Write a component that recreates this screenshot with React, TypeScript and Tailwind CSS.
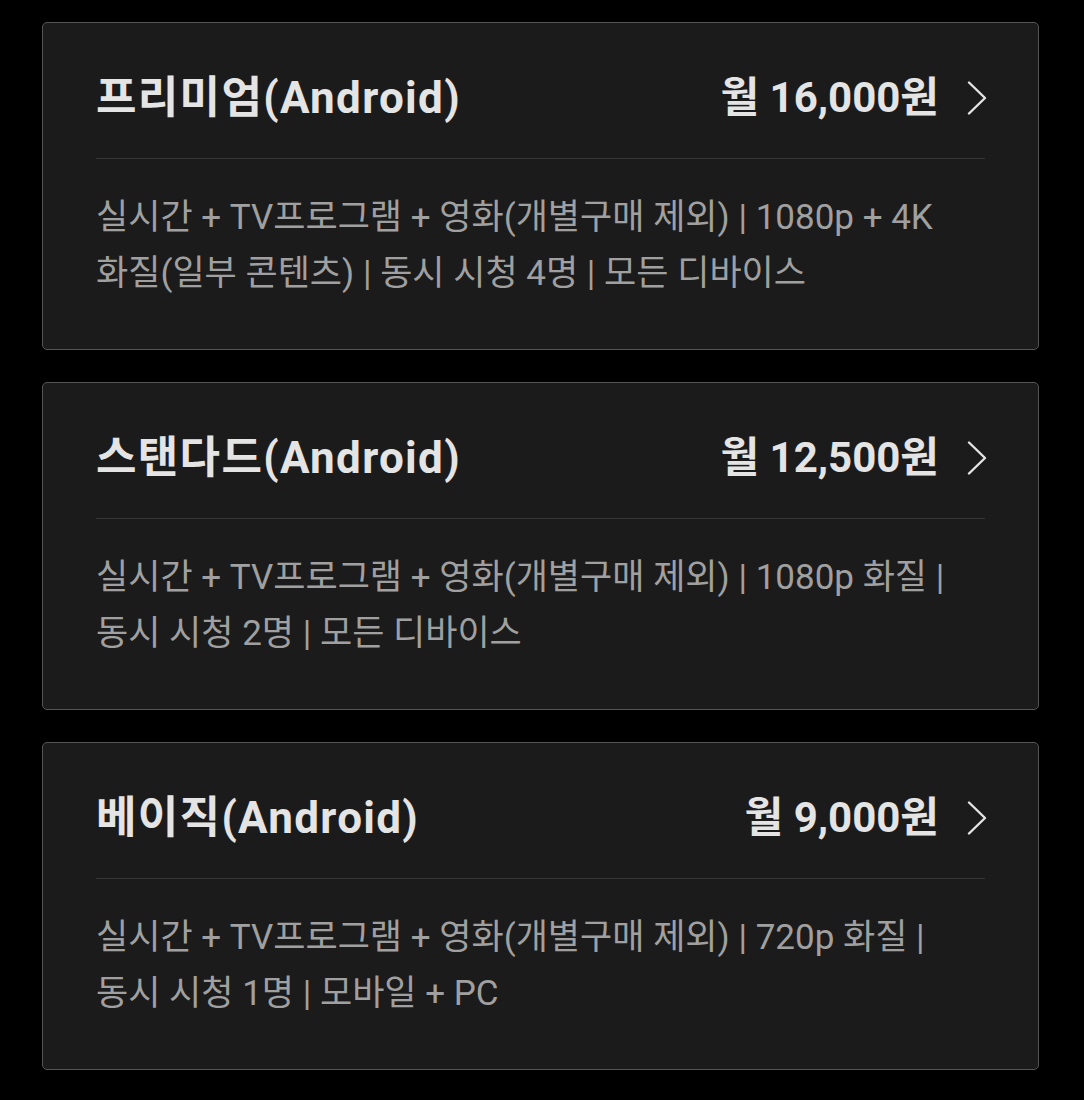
const plans = [
  {
    name: '프리미엄(Android)',
    price: '월 16,000원',
    lines: ['실시간 + TV프로그램 + 영화(개별구매 제외) | 1080p + 4K', '화질(일부 콘텐츠) | 동시 시청 4명 | 모든 디바이스'],
  },
  {
    name: '스탠다드(Android)',
    price: '월 12,500원',
    lines: ['실시간 + TV프로그램 + 영화(개별구매 제외) | 1080p 화질 |', '동시 시청 2명 | 모든 디바이스'],
  },
  {
    name: '베이직(Android)',
    price: '월 9,000원',
    lines: ['실시간 + TV프로그램 + 영화(개별구매 제외) | 720p 화질 |', '동시 시청 1명 | 모바일 + PC'],
  },
];

function Chevron() {
  return (
    <svg width="20" height="34" viewBox="0 0 20 34" fill="none" className="-mr-[2px] shrink-0">
      <polyline points="2,1.5 18,17 2,32.5" stroke="#e4e4e4" strokeWidth="2.4" strokeLinecap="round" strokeLinejoin="round" />
    </svg>
  );
}

export default function App() {
  return (
    <div
      className="min-h-[1100px] w-[1084px] bg-black pl-[42px] pr-[45px] pt-[22px]"
      style={{ fontFamily: 'Roboto, "Noto Sans CJK KR", "Noto Sans", sans-serif' }}
    >
      <div className="flex flex-col gap-[32px]">
        {plans.map((plan) => (
          <div key={plan.name} className="rounded-[5px] border border-[#555555] bg-[#1b1b1b] px-[53px]">
            <div className="flex h-[136px] items-center justify-between border-b border-[#363636] pt-[14px]">
              <h3 className="text-[44px] font-bold leading-none tracking-[0.03em] text-[#e4e4e4]">{plan.name}</h3>
              <div className="flex items-center gap-[28px]">
                <span className="text-[42px] font-bold leading-none text-[#e4e4e4]">{plan.price}</span>
                <Chevron />
              </div>
            </div>
            <div className="pb-[47px] pt-[31px] text-[35px] font-normal leading-[56px] text-[#a0a0a0]">
              {plan.lines.map((line) => (
                <div key={line}>{line}</div>
              ))}
            </div>
          </div>
        ))}
      </div>
    </div>
  );
}
